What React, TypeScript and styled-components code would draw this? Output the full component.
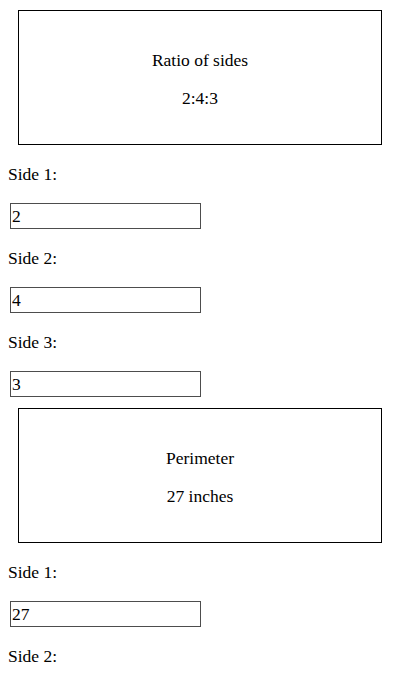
import React from "react";
import styled, { createGlobalStyle } from "styled-components";

const GlobalStyle = createGlobalStyle`
  body {
    margin: 0;
    font-family: "Liberation Serif", "Times New Roman", serif;
    font-size: 17.5px;
    line-height: 20px;
    color: #000;
    background: #fff;
  }
`;

const Page = styled.div`
  display: flex;
  flex-direction: column;
  padding: 0 8px;
`;

// Bordered summary box (ratio / perimeter)
const Card = styled.div`
  box-sizing: border-box;
  height: 135px;
  margin: 11px 10px 0;
  padding: 39px 0 0;
  border: 1px solid #000;
  display: flex;
  flex-direction: column;
  align-items: center;
  gap: 18px;

  &:first-child {
    margin-top: 10px;
  }
`;

const CardLine = styled.div`
  height: 20px;
  text-align: center;
`;

const Field = styled.div`
  display: flex;
  flex-direction: column;
  align-items: flex-start;
`;

const Label = styled.label`
  margin-top: 19px;
  height: 20px;
`;

const Input = styled.input`
  box-sizing: border-box;
  margin: 19px 0 0 2px;
  width: 191px;
  height: 26px;
  padding: 2px 1px;
  border: 1px solid #4d4d4d;
  border-radius: 0;
  font: inherit;
  line-height: 20px;
  color: #000;
  background: #fff;
  outline: none;
`;

interface SideFieldProps {
  label: string;
  value: string;
}

const SideField: React.FC<SideFieldProps> = ({ label, value }) => (
  <Field>
    <Label>{label}</Label>
    <Input defaultValue={value} />
  </Field>
);

const App: React.FC = () => (
  <>
    <GlobalStyle />
    <Page>
      <Card>
        <CardLine>Ratio of sides</CardLine>
        <CardLine>2:4:3</CardLine>
      </Card>
      <SideField label="Side 1:" value="2" />
      <SideField label="Side 2:" value="4" />
      <SideField label="Side 3:" value="3" />
      <Card>
        <CardLine>Perimeter</CardLine>
        <CardLine>27 inches</CardLine>
      </Card>
      <SideField label="Side 1:" value="27" />
      <SideField label="Side 2:" value="" />
    </Page>
  </>
);

export default App;
